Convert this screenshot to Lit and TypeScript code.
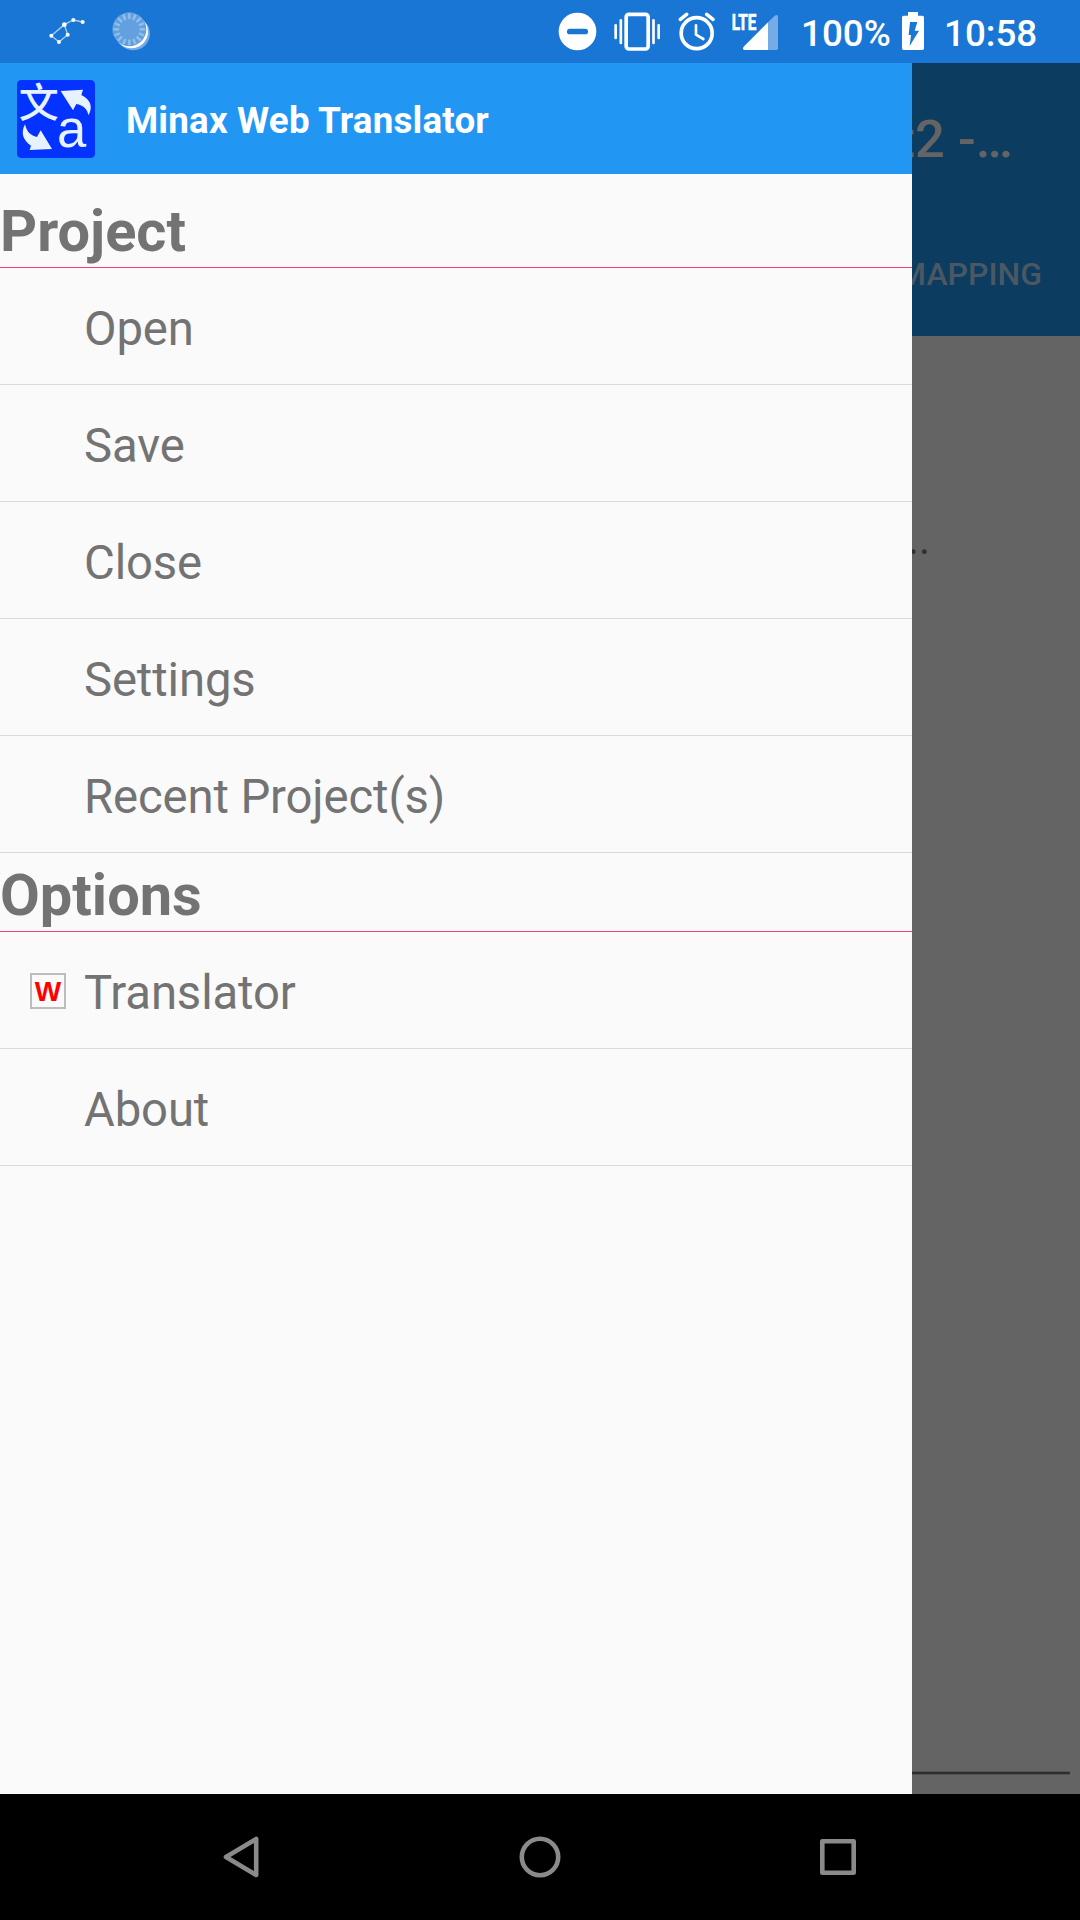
import { LitElement, html, css, svg } from "lit";
import { customElement, property } from "lit/decorators.js";

const rays = Array.from({ length: 16 }, (_, i) => i * 22.5);

@customElement("status-bar")
class StatusBar extends LitElement {
  static styles = css`
    :host {
      display: flex;
      height: 63px;
      background: #1976d4;
      color: #fff;
      font: 500 36.75px/59px Roboto, sans-serif;
    }
    svg {
      display: block;
      flex: none;
      height: 63px;
    }
    .notices {
      display: flex;
      flex: 1;
      padding-left: 40px;
    }
    .system {
      display: flex;
      width: 525px;
    }
    .w55 { width: 55px; }
    .w50 { width: 50px; }
    .w65 { width: 65px; }
    .w60 { width: 60px; }
    .w30 { width: 30px; }
    .percent, .time {
      box-sizing: border-box;
      padding-top: 4px;
      white-space: nowrap;
    }
    .percent {
      width: 118px;
      padding-left: 21px;
    }
    .time {
      padding-left: 16px;
    }
    .lte {
      font: 700 66px Roboto, sans-serif;
      stroke: #fff;
      stroke-width: 2px;
    }
  `;

  render() {
    return html`
      <div class="notices">
        <svg class="w55" viewBox="120 0 165 189">
          <path d="M248 66L220 60L193 74L154 107L177 126L203 104L193 74" fill="none" stroke="#a9cbf0" stroke-width="4" />
          <g fill="#fff">
            <circle cx="248" cy="66" r="6" /><circle cx="220" cy="60" r="6" />
            <circle cx="193" cy="74" r="7" /><circle cx="154" cy="107" r="6" />
            <circle cx="177" cy="126" r="6" /><circle cx="203" cy="104" r="6" />
          </g>
        </svg>
        <svg class="w60" viewBox="285 0 180 189">
          <circle cx="400" cy="101" r="50" fill="#75aae3" />
          <circle cx="394" cy="95" r="50" fill="#fff" />
          <circle cx="388" cy="88" r="51" fill="#63a0df" />
          ${rays.map(
            (a) => svg`<path d="M388 57V40" transform="rotate(${a} 388 88)" stroke="#94bfea" stroke-width="7" />`
          )}
        </svg>
      </div>
      <div class="system">
        <svg class="w50" viewBox="45 0 150 189">
          <circle cx="112.500" cy="94.500" r="56.500" fill="#fff" />
          <rect x="81" y="86" width="63" height="17" rx="8" fill="#1976d4" />
        </svg>
        <svg class="w65" viewBox="195 0 195 189">
          <rect x="258.500" y="43" width="66" height="104" rx="8" fill="none" stroke="#fff" stroke-width="11" />
          <path d="M227 76V114M242.500 61V129M340.500 61V129M356 76V114" stroke="#fff" stroke-width="8" stroke-linecap="round" />
        </svg>
        <svg class="w50" viewBox="390 0 150 189">
          <g fill="none" stroke="#fff" stroke-linecap="round">
            <circle cx="470" cy="99.500" r="46.500" stroke-width="11" />
            <path d="M421 58L440 43M519 58L500 43" stroke-width="11" />
            <path d="M468 76V104L490 117" stroke-width="8" stroke-linejoin="round" />
          </g>
        </svg>
        <svg class="w60" viewBox="540 0 180 189">
          <path d="M684 67L703 48Q714 40 714 52V145Q714 150 709 150H684Z" fill="#75ace5" />
          <path d="M684 67V150H613Q606 148 611 140Z" fill="#fff" />
          <text class="lte" x="575" y="89" textLength="74" lengthAdjust="spacingAndGlyphs" fill="#fff">LTE</text>
        </svg>
        <div class="percent">100%</div>
        <svg class="w30" viewBox="354 0 90 189">
          <path d="M384 36H414V47H427Q432 47 432 52V145Q432 150 427 150H371Q366 150 366 145V52Q366 47 371 47H384Z" fill="#fff" />
          <path d="M390 66H412L404 92H417L389 138L393 105H386Z" fill="#1976d4" />
        </svg>
        <div class="time">10:58</div>
      </div>
    `;
  }
}

@customElement("app-logo")
class AppLogo extends LitElement {
  static styles = css`
    :host { display: block; width: 78px; height: 78px; }
    svg { display: block; width: 78px; height: 78px; }
    .han { font: 500 120px "Noto Sans CJK TC", sans-serif; }
    .latin { font: 400 158px "Liberation Sans", sans-serif; }
  `;

  render() {
    return html`
      <svg viewBox="51 60 234 234">
        <rect x="51" y="60" width="234" height="234" rx="13" fill="#0432ff" />
        <g fill="#e6f3fe">
          <path d="M182 93L249 89L244 105C270 118 281 140 265 166C262 146 250 136 229 132L219 151Z" />
          <path d="M75 193C80 215 90 226 111 231L122 211L156 267L89 270L93 257C68 240 62 218 75 193Z" />
          <text class="han" x="56" y="170">文</text>
          <text class="latin" x="171" y="262">a</text>
        </g>
      </svg>
    `;
  }
}

@customElement("menu-section")
class MenuSection extends LitElement {
  @property() heading = "";
  @property({ attribute: false }) items: { label: string; mark?: string }[] = [];

  static styles = css`
    :host { display: block; }
    .heading {
      padding-top: 7px;
      border-bottom: 1px solid #ef3f80;
      font-size: 57.75px;
      font-weight: 700;
      line-height: 71px;
    }
    :host([first]) .heading { padding-top: 22px; }
    .item {
      display: flex;
      align-items: center;
      height: 116px;
      border-bottom: 1px solid #dadada;
    }
    .slot {
      display: flex;
      width: 54px;
      padding: 2px 0 0 30px;
    }
    .mark {
      display: flex;
      justify-content: center;
      box-sizing: border-box;
      width: 36px;
      height: 36px;
      border: 2px solid #bdbdbd;
      color: #f00;
      font: 700 28px/33px "Liberation Sans", sans-serif;
    }
    .label {
      padding-top: 6px;
      font-size: 47.25px;
      letter-spacing: -0.12px;
      line-height: 110px;
      white-space: nowrap;
    }
  `;

  render() {
    return html`
      <div class="heading">${this.heading}</div>
      ${this.items.map(
        (item) => html`
          <div class="item">
            <div class="slot">${item.mark ? html`<span class="mark">${item.mark}</span>` : ""}</div>
            <div class="label">${item.label}</div>
          </div>
        `
      )}
    `;
  }
}

@customElement("app-root")
class AppRoot extends LitElement {
  static styles = css`
    :host {
      display: flex;
      flex-direction: column;
      width: 1080px;
      height: 1920px;
      overflow: hidden;
      font-family: Roboto, sans-serif;
    }
    .main { display: flex; flex: 1; min-height: 0; }
    .drawer { width: 912px; background: #fafafa; color: #737373; }
    .brand {
      display: flex;
      height: 111px;
      background: #2296f3;
      color: #fff;
    }
    .brand app-logo { margin: 17px 31px 0 17px; }
    .name {
      padding-top: 4px;
      font-size: 36.75px;
      font-weight: 700;
      letter-spacing: 0.18px;
      line-height: 107px;
    }
    .page {
      display: flex;
      flex-direction: column;
      width: 168px;
      overflow: hidden;
      background: #646464;
    }
    .appbar { height: 273px; background: #0d3c61; color: #646464; }
    .title, .tab, .hint {
      display: flex;
      justify-content: flex-end;
      overflow: hidden;
      white-space: pre;
    }
    .title { padding-right: 67px; font-size: 52.5px; font-weight: 500; line-height: 152px; }
    .tab { padding: 9px 38px 0 0; color: #4a5863; font-size: 32px; font-weight: 500; line-height: 100px; }
    .hint { padding: 179px 150px 0 0; color: #303030; font-size: 42px; line-height: 50px; }
    .field {
      flex: 1;
      margin: 0 10px 19px 0;
      border-bottom: 1px solid #545454;
      box-shadow: inset 0 -2px #2e2e2e, inset 0 -3px #545454;
    }
    .nav {
      display: flex;
      height: 126px;
      padding: 0 93px;
      background: #000;
    }
    .key { display: flex; flex: 1; align-items: center; justify-content: center; }
    .key svg { width: 48px; height: 48px; fill: none; stroke: #8a8a8a; stroke-width: 4.6; stroke-linejoin: round; }
  `;

  private project = ["Open", "Save", "Close", "Settings", "Recent Project(s)"].map((label) => ({ label }));
  private options = [{ label: "Translator", mark: "W" }, { label: "About" }];

  render() {
    return html`
      <status-bar></status-bar>
      <div class="main">
        <div class="drawer">
          <div class="brand">
            <app-logo></app-logo>
            <div class="name">Minax Web Translator</div>
          </div>
          <menu-section first heading="Project" .items=${this.project}></menu-section>
          <menu-section heading="Options" .items=${this.options}></menu-section>
        </div>
        <div class="page">
          <div class="appbar">
            <div class="title">t2 -…</div>
            <div class="tab">MAPPING</div>
          </div>
          <div class="hint">...</div>
          <div class="field"></div>
        </div>
      </div>
      <div class="nav">
        <div class="key"><svg viewBox="0 0 48 48"><path d="M38.200 6V42L8 24Z" /></svg></div>
        <div class="key"><svg viewBox="0 0 48 48"><circle cx="24" cy="24" r="18.200" /></svg></div>
        <div class="key"><svg viewBox="0 0 48 48"><rect x="8.300" y="8.300" width="31.400" height="31.400" /></svg></div>
      </div>
    `;
  }
}
